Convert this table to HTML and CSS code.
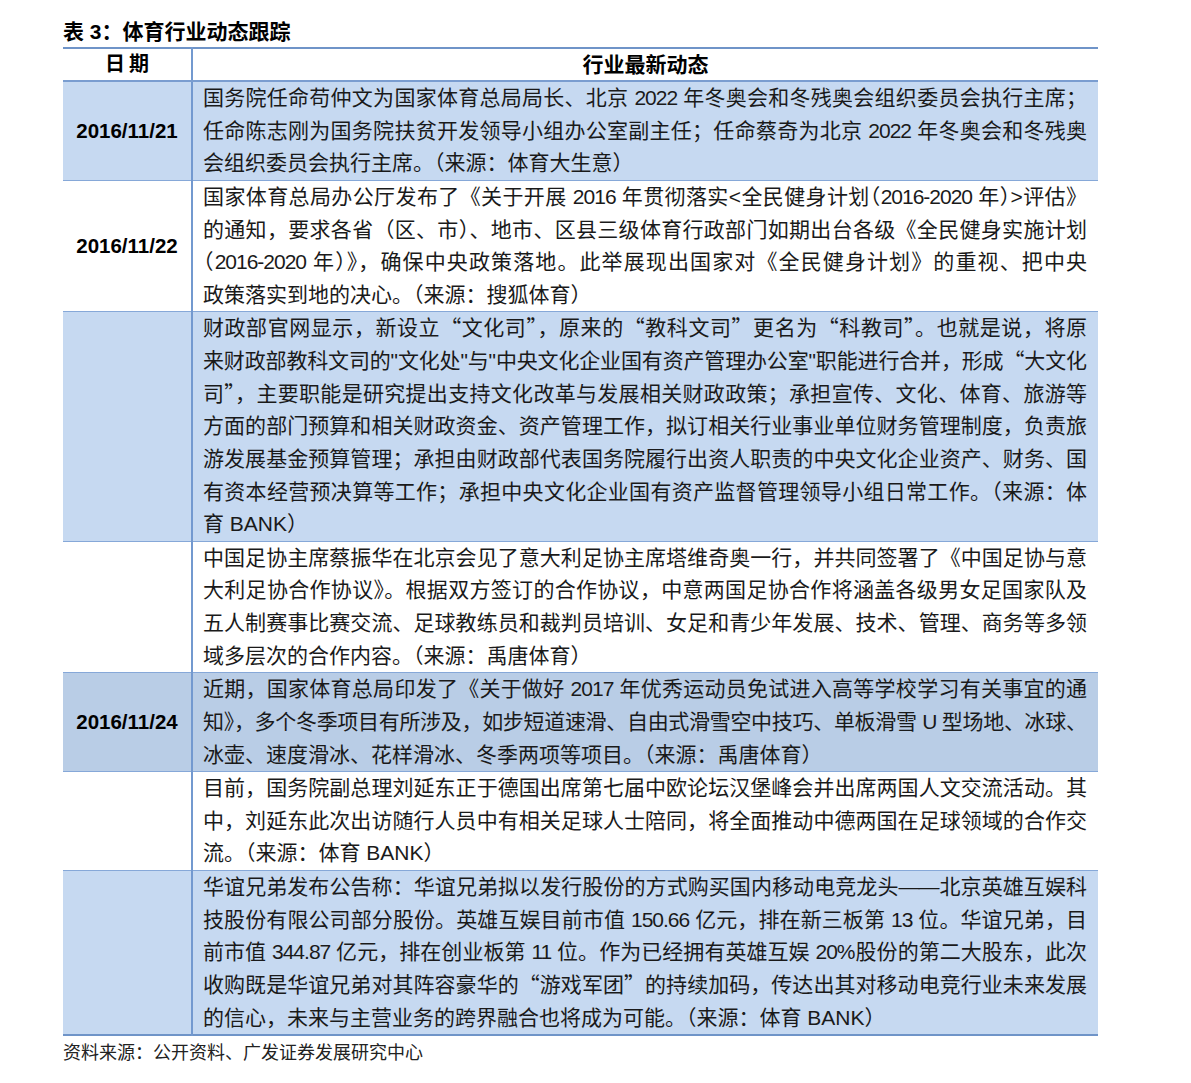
FILE: index.html
```html
<!DOCTYPE html>
<html lang="zh-CN">
<head>
<meta charset="utf-8">
<title>表 3：体育行业动态跟踪</title>
<link rel="stylesheet" href="styles.css">
</head>
<body>
<div class="page">
  <div class="title">表 3：体育行业动态跟踪</div>
  <table class="tbl">
    <colgroup><col class="c-date"><col class="c-text"></colgroup>
    <thead>
      <tr><th class="h-date">日期</th><th>行业最新动态</th></tr>
    </thead>
    <tbody>
      <tr class="blue">
        <td class="date">2016/11/21</td>
        <td class="txt">
          <span class="ln">国务院任命苟仲文为国家体育总局局长、北京 2022 年冬奥会和冬残奥会组织委员会执行主席；</span>
          <span class="ln">任命陈志刚为国务院扶贫开发领导小组办公室副主任；任命蔡奇为北京 2022 年冬奥会和冬残奥</span>
          <span class="ln last">会组织委员会执行主席。（来源：体育大生意）</span>
        </td>
      </tr>
      <tr>
        <td class="date">2016/11/22</td>
        <td class="txt">
          <span class="ln">国家体育总局办公厅发布了《关于开展 2016 年贯彻落实&lt;全民健身计划<span class="hp">（</span>2016-2020 年<span class="hp">）</span>&gt;评估》</span>
          <span class="ln">的通知，要求各省（区、市）、地市、区县三级体育行政部门如期出台各级《全民健身实施计划</span>
          <span class="ln"><span class="hp">（</span>2016-2020 年<span class="hp">）</span>》，确保中央政策落地。此举展现出国家对《全民健身计划》的重视、把中央</span>
          <span class="ln last">政策落实到地的决心。（来源：搜狐体育）</span>
        </td>
      </tr>
      <tr class="blue">
        <td class="date"></td>
        <td class="txt">
          <span class="ln">财政部官网显示，新设立<span class="cq">“</span>文化司<span class="cq">”</span>，原来的<span class="cq">“</span>教科文司<span class="cq">”</span>更名为<span class="cq">“</span>科教司<span class="cq">”</span>。也就是说，将原</span>
          <span class="ln">来财政部教科文司的"文化处"与"中央文化企业国有资产管理办公室"职能进行合并，形成<span class="cq">“</span>大文化</span>
          <span class="ln">司<span class="cq">”</span>，主要职能是研究提出支持文化改革与发展相关财政政策；承担宣传、文化、体育、旅游等</span>
          <span class="ln">方面的部门预算和相关财政资金、资产管理工作，拟订相关行业事业单位财务管理制度，负责旅</span>
          <span class="ln">游发展基金预算管理；承担由财政部代表国务院履行出资人职责的中央文化企业资产、财务、国</span>
          <span class="ln">有资本经营预决算等工作；承担中央文化企业国有资产监督管理领导小组日常工作。（来源：体</span>
          <span class="ln last">育 BANK）</span>
        </td>
      </tr>
      <tr>
        <td class="date"></td>
        <td class="txt">
          <span class="ln">中国足协主席蔡振华在北京会见了意大利足协主席塔维奇奥一行，并共同签署了《中国足协与意</span>
          <span class="ln">大利足协合作协议》。根据双方签订的合作协议，中意两国足协合作将涵盖各级男女足国家队及</span>
          <span class="ln">五人制赛事比赛交流、足球教练员和裁判员培训、女足和青少年发展、技术、管理、商务等多领</span>
          <span class="ln last">域多层次的合作内容。（来源：禹唐体育）</span>
        </td>
      </tr>
      <tr class="blue2">
        <td class="date">2016/11/24</td>
        <td class="txt">
          <span class="ln">近期，国家体育总局印发了《关于做好 2017 年优秀运动员免试进入高等学校学习有关事宜的通</span>
          <span class="ln">知》，多个冬季项目有所涉及，如步短道速滑、自由式滑雪空中技巧、单板滑雪 U 型场地、冰球、</span>
          <span class="ln last">冰壶、速度滑冰、花样滑冰、冬季两项等项目。（来源：禹唐体育）</span>
        </td>
      </tr>
      <tr>
        <td class="date"></td>
        <td class="txt">
          <span class="ln">目前，国务院副总理刘延东正于德国出席第七届中欧论坛汉堡峰会并出席两国人文交流活动。其</span>
          <span class="ln">中，刘延东此次出访随行人员中有相关足球人士陪同，将全面推动中德两国在足球领域的合作交</span>
          <span class="ln last">流。（来源：体育 BANK）</span>
        </td>
      </tr>
      <tr class="blue">
        <td class="date"></td>
        <td class="txt">
          <span class="ln">华谊兄弟发布公告称：华谊兄弟拟以发行股份的方式购买国内移动电竞龙头——北京英雄互娱科</span>
          <span class="ln">技股份有限公司部分股份。英雄互娱目前市值 150.66 亿元，排在新三板第 13 位。华谊兄弟，目</span>
          <span class="ln">前市值 344.87 亿元，排在创业板第 11 位。作为已经拥有英雄互娱 20%股份的第二大股东，此次</span>
          <span class="ln">收购既是华谊兄弟对其阵容豪华的<span class="cq">“</span>游戏军团<span class="cq">”</span>的持续加码，传达出其对移动电竞行业未来发展</span>
          <span class="ln last">的信心，未来与主营业务的跨界融合也将成为可能。（来源：体育 BANK）</span>
        </td>
      </tr>
    </tbody>
  </table>
  <div class="source">资料来源：公开资料、广发证券发展研究中心</div>
</div>
</body>
</html>
```
FILE: styles.css
```css
html, body {
  margin: 0;
  padding: 0;
  background: #ffffff;
}
body {
  font-family: "Liberation Sans", "Noto Sans CJK SC", sans-serif;
  color: #111111;
}
.page {
  padding: 16px 0 0 63px;
  width: 1035px;
}
.title {
  font-size: 21px;
  font-weight: bold;
  line-height: 31px;
  height: 31px;
  color: #000;
}
.tbl {
  width: 1035px;
  border-collapse: collapse;
  table-layout: fixed;
  border-top: 2px solid #6f94c8;
  border-bottom: 2px solid #6f94c8;
}
.c-date { width: 129px; }
.c-text { width: 906px; }
.tbl th {
  font-size: 20px;
  font-weight: bold;
  height: 31px;
  padding: 0;
  line-height: 31px;
  text-align: center;
  color: #000;
  border-bottom: 2px solid #7a9dd0;
}
.tbl th + th {
  font-size: 21px;
}
.tbl th:first-child,
.tbl td:first-child {
  border-right: 2px solid #7399cf;
}
.h-date {
  letter-spacing: 4px;
  text-indent: 4px;
}
.tbl td {
  padding: 0;
  border-top: 1px solid #86a8d8;
  vertical-align: middle;
}
.tbl tbody tr:first-child td { border-top: none; }
.blue td { background: #c6d9f1; }
.blue2 td { background: #b9cde6; }
.date {
  font-size: 20.5px;
  font-weight: bold;
  text-align: center;
  color: #000;
}
.tbl td.txt {
  font-size: 21px;
  line-height: 32.62px;
  padding: 0 12px 0 10px;
  color: #1a1a1a;
}
.ln {
  display: block;
  text-align: justify;
  text-align-last: justify;
  letter-spacing: -1px;
}
.ln.last {
  text-align-last: left;
  letter-spacing: 0;
}
.cq {
  font-family: "Noto Sans CJK SC", sans-serif;
  line-height: 1;
}
.hp {
  font-family: "Noto Sans CJK SC", sans-serif;
  font-feature-settings: "halt" 1;
  line-height: 1;
}
.source {
  font-size: 18px;
  line-height: 24px;
  margin-top: 5px;
  color: #222;
}
```
